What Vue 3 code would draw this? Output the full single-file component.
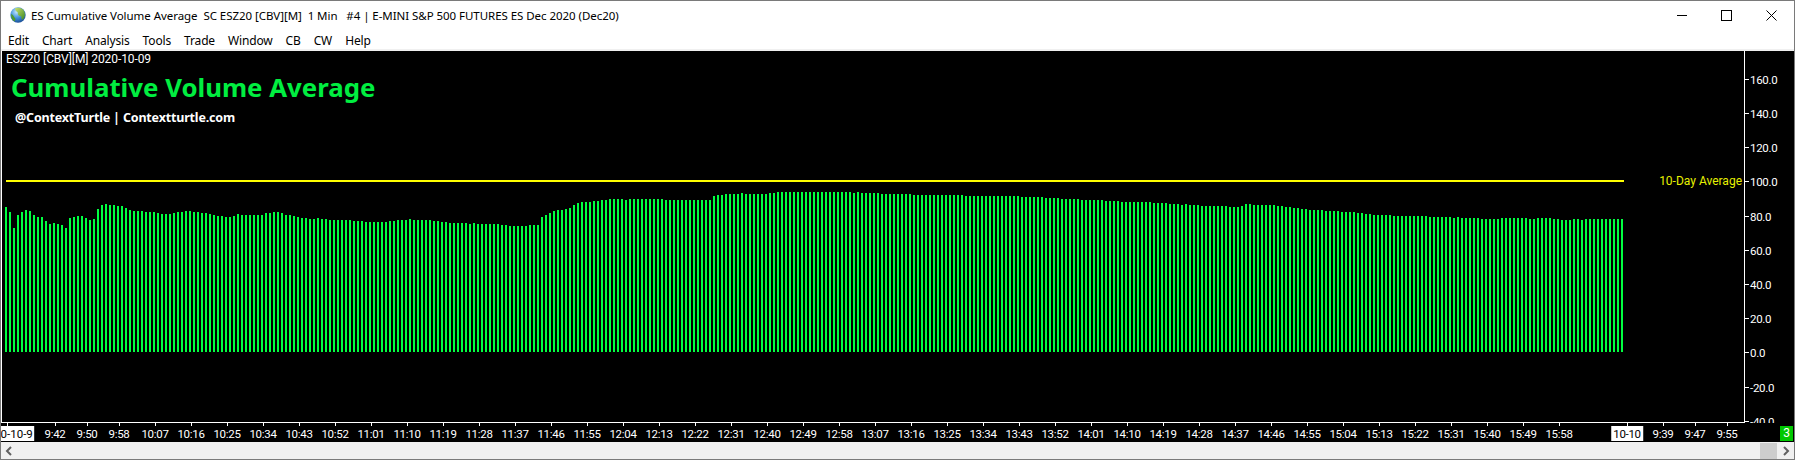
<script setup>
const rle = (...pairs) => pairs.flatMap(([v, n]) => Array(n).fill(v))
const list = (...vals) => vals

const titleText = 'ES Cumulative Volume Average  SC ESZ20 [CBV][M]  1 Min   #4 | E-MINI S&P 500 FUTURES ES Dec 2020 (Dec20)'

const tops = [
  ...list(207,212,228,215,212,210,211,215,217,217,221,224,223,224,225,228,218,217,216,216,218,220,219,209,205,204,205,205,206,206,208,210,211,211,211,212,212,212,213,214,214,214,213,212,212,211,211,212,212,213,213,214,215,216,216,217,217,216,214,215,215,215,215,215,215,213,213,212,212,213,215,215,216),
  ...list(217,218,218,219,219,218,219,219,220,220,220,220,220,220,221,221,221,222,222,222,222,222,222,221,221,220,220,220,219,220,220,220,220,220,221,221,222,222,223,223,223,223,223,224,223,224,224,224,224,224,224),
  ...list(225,225,226,226,226,226,226,225,225,225,217,215,213,211,210,210,209,208,205,203,202,202,202,201,201,200,200,199,199,199,199,200),
  ...rle([199,9],[200,12],[196,1],[195,2],[194,4],[193,1],[194,6],[193,2],[192,5]),
  ...rle([192,14],[193,1],[192,1],[193,5],[194,8],[195,13],[196,14],[197,6],[198,4],[199,5],[200,6],[201,4],[202,8]),
  ...rle([203,4],[204,3],[205,1],[204,1],[205,3],[206,7],[207,3],[206,1],[204,2],[205,6],[206,2],[207,2],[208,2],[209,2],[210,4],[211,4],[212,4],[213,2],[214,2],[215,5],[216,9],[217,6],[218,1],[217,1],[218,5],[219,5]),
  ...rle([218,7],[219,2],[218,4],[219,2],[220,3],[219,2],[220,1],[219,10])
]
const BASE = 352
const bars = tops.map((t, i) => ({ id: i, h: BASE - t }))

const menus = ['Edit', 'Chart', 'Analysis', 'Tools', 'Trade', 'Window', 'CB', 'CW', 'Help']

const values = [160, 140, 120, 100, 80, 60, 40, 20, 0, -20, -40].map(v => ({
  text: v.toFixed(1),
  top: Math.round(BASE + 0.4 - v * 1.71) - 51
}))

const fmt = m => `${Math.floor(m / 60)}:${String(m % 60).padStart(2, '0')}`
const times = [
  { x: 6, text: '2020-10-9', date: true, first: true },
  { x: 54, text: '9:42' },
  { x: 86, text: '9:50' },
  { x: 118, text: '9:58' }
]
for (let k = 0; k < 40; k++) {
  times.push({ x: 154 + 36 * k, text: fmt(607 + 9 * k) })
}
times.push({ x: 1626, text: '10-10', date: true })
times.push({ x: 1662, text: '9:39' })
times.push({ x: 1694, text: '9:47' })
times.push({ x: 1726, text: '9:55' })
</script>

<template>
  <div class="window">
    <header class="titlebar">
      <svg class="globe" width="16" height="16" viewBox="0 0 16 16">
        <defs>
          <radialGradient id="sea" cx="0.4" cy="0.3" r="0.8">
            <stop offset="0" stop-color="#bfe6ff" />
            <stop offset="0.5" stop-color="#3f8fd8" />
            <stop offset="1" stop-color="#123f86" />
          </radialGradient>
          <linearGradient id="land" x1="0" y1="0" x2="1" y2="1">
            <stop offset="0" stop-color="#c8e070" />
            <stop offset="1" stop-color="#3f8a20" />
          </linearGradient>
        </defs>
        <circle cx="8" cy="8" r="7.7" fill="url(#sea)" />
        <path d="M5 1.2c3-1 6-.6 8 1.3 1.6 1.7 2.2 4 1.8 6.2-.4 1.6-1.2 3-2.4 4-1-.6-1.2-2-1-3.2-.9-.5-2.6-.3-3.2-1.4-.6-1.2.2-2.3-.8-3.1C6.3 4.2 5 3.3 5 1.2z" fill="url(#land)" />
        <path d="M1.2 7c1 .4 2 1.2 2.6 2.4.5 1 1.6 1.4 1.6 2.6 0 1-.6 1.8-.9 2.5C2.3 13.3.8 10.3 1.2 7z" fill="#4f9a2a" />
      </svg>
      <span class="title-text">{{ titleText }}</span>
      <div class="controls">
        <svg class="ctl" width="10" height="11" viewBox="0 0 10 11"><path d="M0 5.5H10" stroke="#000" stroke-width="1" /></svg>
        <svg class="ctl" width="11" height="11" viewBox="0 0 11 11"><rect x="0.5" y="0.5" width="10" height="10" fill="none" stroke="#000" /></svg>
        <svg class="ctl" width="11" height="11" viewBox="0 0 11 11"><path d="M0.5 0.5L10.5 10.5M10.5 0.5L0.5 10.5" stroke="#000" stroke-width="1" fill="none" /></svg>
      </div>
    </header>

    <nav class="menubar">
      <span v-for="m in menus" :key="m" class="menu">{{ m }}</span>
    </nav>

    <main class="chart">
      <div class="upper">
        <section class="plot">
          <div class="bars">
            <i v-for="b in bars" :key="b.id" class="bar" :style="{ height: b.h + 'px' }"></i>
          </div>
          <div class="avg-line"></div>
          <div class="avg-label">10-Day Average</div>
          <div class="overlay">
            <div class="symbol">ESZ20 [CBV][M] 2020-10-09</div>
            <div class="headline">Cumulative Volume Average</div>
            <div class="handle">@ContextTurtle | Contextturtle.com</div>
          </div>
        </section>
        <aside class="value-axis">
          <div v-for="v in values" :key="v.text" class="value" :style="{ top: v.top + 'px' }">
            <i class="vtick"></i><span>{{ v.text }}</span>
          </div>
        </aside>
      </div>
      <div class="time-axis">
        <div v-for="t in times" :key="t.x" class="time" :style="{ left: t.x + 'px' }">
          <i class="ttick"></i>
          <span :class="['tlabel', { date: t.date, first: t.first }]">{{ t.text }}</span>
        </div>
        <span class="badge">3</span>
      </div>
    </main>

    <footer class="scrollbar">
      <svg class="chev" width="8" height="10" viewBox="0 0 8 10"><path d="M6 1L2 5l4 4" fill="none" stroke="#606060" stroke-width="2" /></svg>
      <div class="thumb"></div>
      <svg class="chev" width="8" height="10" viewBox="0 0 8 10"><path d="M2 1l4 4-4 4" fill="none" stroke="#606060" stroke-width="2" /></svg>
    </footer>
  </div>
</template>

<style>
html, body { margin: 0; background: #fff; }
</style>

<style scoped>
.window {
  width: 1795px;
  height: 460px;
  box-sizing: border-box;
  border: 1px solid #7a7a7a;
  display: flex;
  flex-direction: column;
  background: #fff;
  font-family: "Noto Sans", sans-serif;
  overflow: hidden;
}
.titlebar {
  height: 26px;
  flex: none;
  box-sizing: border-box;
  padding: 2px 0 0 9px;
  display: flex;
  align-items: center;
  gap: 5px;
  color: #000;
}
.title-text {
  font-size: 11.5px;
  white-space: pre;
  letter-spacing: -0.05px;
}
.controls {
  margin-left: auto;
  display: flex;
  align-items: center;
  gap: 34px;
  padding-right: 17px;
}
.menubar {
  height: 24px;
  flex: none;
  box-sizing: border-box;
  display: flex;
  align-items: center;
  gap: 13px;
  padding: 4px 0 0 7px;
  border-bottom: 2px solid #f0f0f0;
  font-size: 12px;
  letter-spacing: -0.15px;
  color: #000;
}
.chart {
  height: 391px;
  flex: none;
  background: #000;
  display: flex;
  flex-direction: column;
  font-family: "Roboto", sans-serif;
}
.upper {
  height: 372px;
  flex: none;
  display: flex;
}
.plot {
  position: relative;
  width: 1744px;
  flex: none;
  box-sizing: border-box;
  border-left: 1px solid #fff;
  border-right: 1px solid #fff;
  border-bottom: 1px solid #fff;
  overflow: hidden;
  display: flex;
  flex-direction: column;
  justify-content: flex-end;
}
.bars {
  display: flex;
  align-items: flex-end;
  gap: 2px;
  padding: 0 0 70px 3px;
}
.bar {
  width: 2px;
  flex: none;
  background: #00ff41;
}
.avg-line {
  position: absolute;
  left: 4px;
  top: 129px;
  width: 1618px;
  height: 2px;
  background: #ffff00;
}
.avg-label {
  position: absolute;
  right: 2px;
  top: 122px;
  font-size: 12px;
  line-height: 16px;
  color: #e6f000;
}
.overlay {
  position: absolute;
  left: 4px;
  top: 0;
  display: flex;
  flex-direction: column;
  align-items: flex-start;
}
.symbol {
  font-size: 12px;
  line-height: 16px;
  letter-spacing: -0.09px;
  color: #fff;
}
.headline {
  margin: 4px 0 0 5px;
  font-family: "Noto Sans", sans-serif;
  font-weight: 700;
  font-size: 25.8px;
  line-height: 32px;
  color: #00ee40;
}
.handle {
  margin: 7px 0 0 9px;
  font-family: "Noto Sans", sans-serif;
  font-weight: 700;
  font-size: 12.5px;
  letter-spacing: -0.17px;
  line-height: 16px;
  color: #fff;
}
.value-axis {
  position: relative;
  flex: 1;
  overflow: hidden;
}
.value {
  position: absolute;
  left: 0;
  display: flex;
  align-items: center;
  gap: 1px;
  height: 17px;
  margin-top: -8px;
  color: #fff;
  font-size: 11.5px;
  letter-spacing: -0.3px;
  white-space: nowrap;
}
.vtick {
  width: 4px;
  height: 1px;
  background: #fff;
}
.time-axis {
  position: relative;
  flex: 1;
  overflow: hidden;
  color: #fff;
  font-size: 11.5px;
  letter-spacing: -0.3px;
}
.time {
  position: absolute;
  top: 0;
  width: 0;
  height: 100%;
}
.ttick {
  position: absolute;
  left: 0;
  top: 0;
  width: 1px;
  height: 3px;
  background: #fff;
}
.tlabel {
  position: absolute;
  left: 0;
  top: 3px;
  transform: translateX(-50%);
  box-sizing: border-box;
  height: 15px;
  padding-top: 1px;
  line-height: 14px;
  white-space: nowrap;
}
.tlabel.date {
  background: #fff;
  color: #000;
  padding-left: 2px;
  padding-right: 2px;
}
.tlabel.first {
  letter-spacing: 0;
  padding-left: 1px;
  padding-right: 1px;
}
.badge {
  position: absolute;
  left: 1779px;
  top: 3px;
  width: 13px;
  height: 15px;
  line-height: 15px;
  text-align: center;
  font-size: 12px;
  background: #00c800;
  color: #fff;
}
.scrollbar {
  flex: 1;
  display: flex;
  align-items: stretch;
  background: #f0f0f0;
  padding-left: 4px;
}
.chev {
  align-self: center;
  flex: none;
}
.thumb {
  margin: 1px 5px 0 auto;
  width: 17px;
  background: #cdcdcd;
}
.scrollbar .chev:last-child {
  margin-right: 4px;
}
</style>
